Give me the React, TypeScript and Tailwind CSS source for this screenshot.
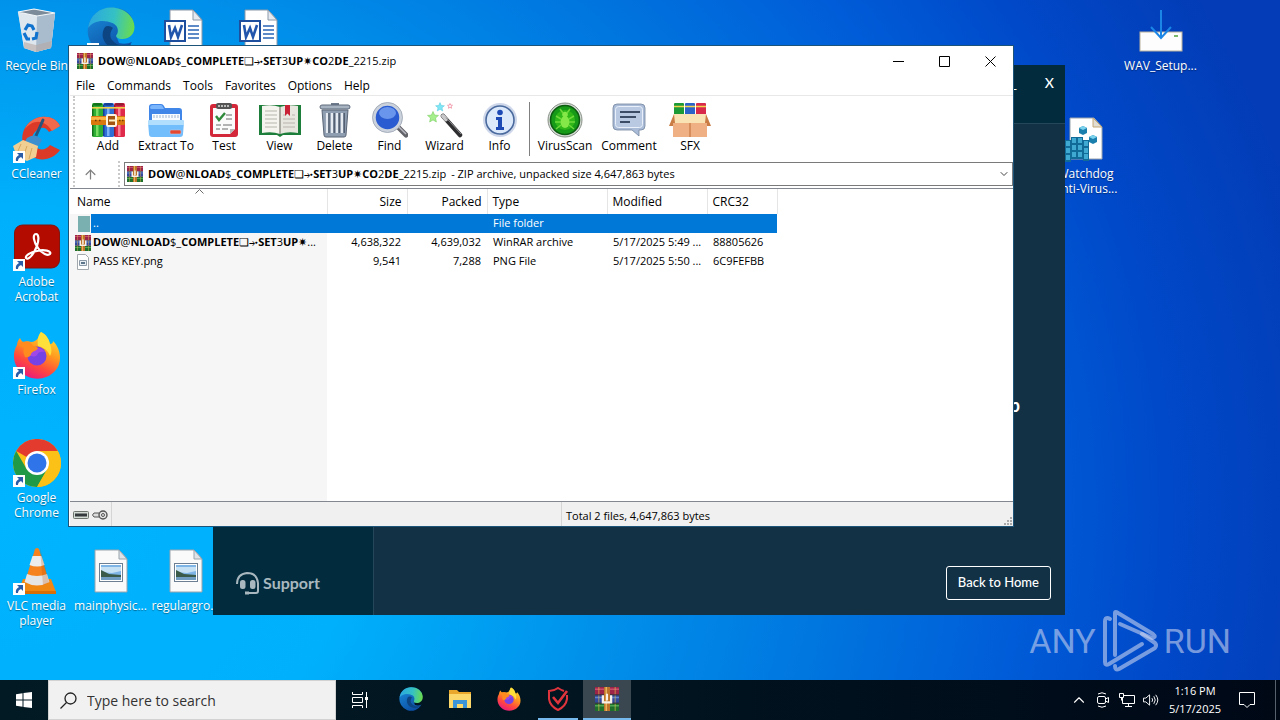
import type { ReactNode } from "react";
import { ArrowUp, ChevronDown, ChevronUp } from "lucide-react";

/* ---------- WinRAR artwork ---------- */

function WinRarIcon({ className }: { className: string }) {
  return (
    <svg viewBox="0 0 16 16" className={className} aria-hidden="true">
      <rect width="16" height="5" y="0" fill="#9c2448" />
      <rect width="16" height="1" y="1" fill="#c9506a" />
      <rect width="16" height="5" y="5.5" fill="#33499c" />
      <rect width="16" height="1" y="6.5" fill="#5f83cc" />
      <rect width="16" height="5" y="11" fill="#1f6f2c" />
      <rect width="16" height="1" y="12" fill="#4fa552" />
      <path d="M2 0h1v5H2zM13 0h1v5h-1zM2 5.5h1v5H2zM13 5.5h1v5h-1zM2 11h1v5H2zM13 11h1v5h-1z" fill="#d9b84c" opacity=".45" />
      <path d="M0 5h16v.5H0zM0 10.500h16v.5H0z" fill="#3b2a33" />
      <rect x="6" width="4" height="16" fill="#bd742a" />
      <rect x="7" width="1" height="16" fill="#e8b45c" />
      <path d="M4.500 5.500H6v4h4v-4h1.500v5.500h-7z" fill="#f5efe8" />
      <path d="M7.300 4.500h1.400v4.500H7.300z" fill="#f5efe8" />
    </svg>
  );
}

function AddIcon() {
  const books = [
    { x: 2, main: "#2fae36", dark: "#12701b", light: "#8ce86f" },
    { x: 13, main: "#2f6fd6", dark: "#153f92", light: "#8cc2ff" },
    { x: 24, main: "#e02a4c", dark: "#951a30", light: "#ff9aa6" },
  ];
  return (
    <svg viewBox="0 0 36 36" className="size-9" aria-hidden="true">
      {books.map((b) => (
        <g key={b.x}>
          <rect x={b.x} y="1" width="11" height="34" rx="1.5" fill={b.main} />
          <rect x={b.x} y="3" width="1.5" height="31" fill={b.dark} />
          <rect x={b.x + 4} y="6" width="2.5" height="28" fill={b.light} opacity=".8" />
          <ellipse cx={b.x + 5.5} cy="2.4" rx="4.6" ry="1.4" fill={b.dark} />
          <rect x={b.x} y="5" width="11" height="1.6" fill="#f0cf4b" />
        </g>
      ))}
      <rect x="1" y="14" width="34" height="9" rx="1" fill="#d9780f" />
      <rect x="1" y="15" width="34" height="3" fill="#fbb545" />
      <path d="M5 18.500h1.500M9 18.500h1.500M29 18.500h1.500M32 18.500h1.500" stroke="#6b3a06" strokeWidth="1.6" />
      <rect x="17" y="13" width="9" height="11" rx="1" fill="#a35410" stroke="#fff3e0" strokeWidth="2" />
      <path d="M19 18.500h8" stroke="#fff1c4" strokeWidth="2" />
    </svg>
  );
}

function ExtractIcon() {
  return (
    <svg viewBox="0 0 38 36" className="h-9 w-[38px]" aria-hidden="true">
      <path d="M2 5q0-3 3-3h9q2 0 3 2l1 2h14q3 0 3 3v20H2z" fill="#3f86e8" />
      <path d="M3 6q0-3 3-3h8q1 0 2 2l1 2H4z" fill="#7ab4fb" />
      <path d="M5 12h28v12H5z" fill="#f8fbff" />
      <path d="M7 13v3M10 13v3M13 13v3M16 13v3M19 13v3M22 13v3M25 13v3M28 13v3M31 13v3" stroke="#9fb4d0" strokeWidth="1" />
      <path d="M1 20q0-2 2-2h32q2 0 2 2l-1 12q0 3-3 3H5q-3 0-3-3z" fill="#72bdfb" />
      <path d="M1 20q0-2 2-2h32q2 0 2 2v3H1z" fill="#b2defe" />
      <rect x="23" y="28" width="11" height="4" rx="1" fill="#e5482f" stroke="#b7c9e8" strokeWidth=".6" />
    </svg>
  );
}

function TestIcon() {
  return (
    <svg viewBox="0 0 30 36" className="h-9 w-[30px]" aria-hidden="true">
      <rect x="1" y="2" width="28" height="33" rx="3" fill="#d3283a" />
      <path d="M4 6h22v21l-5 5H4z" fill="#fbfbfb" />
      <path d="M26 27l-5 5v-5z" fill="#b9b9b9" />
      <rect x="7" y="1" width="16" height="6" rx="2" fill="#555" />
      <path d="M9 4h12" stroke="#ddd" strokeWidth="1.5" strokeDasharray="2 1" />
      <path d="M7 14l3 4 6-7" fill="none" stroke="#2f8a3c" strokeWidth="2.4" />
      <path d="M17 13h6M17 17h6M7 23h5M14 23h9M7 27h4M13 27h6" stroke="#6d6d6d" strokeWidth="1.2" />
    </svg>
  );
}

function ViewIcon() {
  return (
    <svg viewBox="0 0 44 36" className="h-9 w-11" aria-hidden="true">
      <path d="M1 3h42v30H25l-3 2-3-2H1z" fill="#1d7d3a" />
      <path d="M4 4q10-2 18 1v27q-8-3-18-1z" fill="#f5f4ee" />
      <path d="M40 4q-10-2-18 1v27q8-3 18-1z" fill="#e8e7df" />
      <path d="M22 5v27" stroke="#8e8e86" strokeWidth="1.4" />
      <path d="M7 9h12M7 13h12M7 17h12M7 21h12M7 25h12M25 17h12M25 21h12M25 25h12M25 13h2M34 13h3" stroke="#b5b4ac" strokeWidth="1.2" />
      <path d="M27 3h5v11l-2.500-2.500L27 14z" fill="#c92236" />
    </svg>
  );
}

function DeleteIcon() {
  return (
    <svg viewBox="0 0 32 36" className="h-9 w-8" aria-hidden="true">
      <path d="M12 1h8v2h-8z" fill="#6d7b8d" />
      <rect x="1" y="3" width="30" height="4" rx="2" fill="#a8b3c1" stroke="#5d6a7b" />
      <path d="M3 8h26l-2 25q0 2-2 2H7q-2 0-2-2z" fill="#8f9db0" stroke="#5a6677" />
      <path d="M8 11v20M13 11v20M18 11v20M23 11v20" stroke="#e6ebf1" strokeWidth="2.200" />
      <path d="M10 11v20M15.200 11v20M20.200 11v20M25.200 11v20" stroke="#465365" strokeWidth="1.200" />
    </svg>
  );
}

function FindIcon() {
  return (
    <svg viewBox="0 0 36 36" className="size-9" aria-hidden="true">
      <path d="M25 24l9 9" stroke="#63636a" strokeWidth="5" strokeLinecap="round" />
      <path d="M25 23l9 9" stroke="#b9b9c2" strokeWidth="1.500" />
      <circle cx="15.500" cy="15.500" r="13.500" fill="#2a5bd0" stroke="#cbd2dc" strokeWidth="3.500" />
      <circle cx="15.500" cy="15.500" r="15" fill="none" stroke="#8b95a5" strokeWidth=".6" />
      <ellipse cx="15.500" cy="11" rx="8.500" ry="6" fill="#7fa9f6" opacity=".75" />
    </svg>
  );
}

function WizardIcon() {
  const star = "M0-5.500L1.600-1.900 5.500-1.600 2.500 1 3.400 5 0 2.900-3.400 5-2.500 1-5.500-1.600-1.600-1.900z";
  return (
    <svg viewBox="0 0 36 36" className="size-9" aria-hidden="true">
      <path d="M16 14L33 33" stroke="#2e2e30" strokeWidth="4.500" strokeLinecap="round" />
      <path d="M16 14l3 3.300" stroke="#c8c8ca" strokeWidth="4" strokeLinecap="round" />
      <path d="M19 15.500L34 32" stroke="#8c8c90" strokeWidth="1" />
      <path d={star} transform="translate(6 15)" fill="#a5ef8d" stroke="#7ccf63" strokeWidth=".6" />
      <path d={star} transform="translate(13 5) scale(.8)" fill="#7fe6f5" stroke="#4cc3dc" strokeWidth=".6" />
      <path d={star} transform="translate(23 4) scale(.45)" fill="#fff" stroke="#ee7f95" strokeWidth="1.600" />
    </svg>
  );
}

function InfoIcon() {
  return (
    <svg viewBox="0 0 36 36" className="size-9" aria-hidden="true">
      <circle cx="18" cy="18" r="17" fill="#cfd8ea" />
      <circle cx="18" cy="18" r="14" fill="#dce9fb" stroke="#4a6a9e" strokeWidth="1.600" />
      <circle cx="18" cy="10.500" r="2.800" fill="#1d49b4" />
      <path d="M14 15h6v10h2v3h-8v-3h2v-7h-2z" fill="#1d49b4" />
    </svg>
  );
}

function VirusIcon() {
  return (
    <svg viewBox="0 0 36 36" className="size-9" aria-hidden="true">
      <circle cx="18" cy="18" r="17" fill="#d8dcd8" stroke="#6c776c" strokeWidth=".8" />
      <circle cx="18" cy="18" r="14.500" fill="#179a18" stroke="#0c5b10" strokeWidth="1.600" />
      <circle cx="18" cy="18" r="10" fill="#2fb818" />
      <ellipse cx="18" cy="20" rx="4.500" ry="6" fill="#84e848" />
      <circle cx="18" cy="12.500" r="2.800" fill="#84e848" />
      <path d="M14 17l-5-3M14 20H8M14 23l-5 4M22 17l5-3M22 20h6M22 23l5 4M16 11l-3-4M20 11l3-4" stroke="#6fd93c" strokeWidth="1.500" />
    </svg>
  );
}

function CommentIcon() {
  return (
    <svg viewBox="0 0 34 36" className="h-9 w-[34px]" aria-hidden="true">
      <path d="M5 2h24q4 0 4 4v18q0 4-4 4h-2v6l-7-6H5q-4 0-4-4V6q0-4 4-4z" fill="#a9bbd6" stroke="#74869f" strokeWidth=".8" />
      <rect x="3.500" y="4.500" width="27" height="21" rx="3" fill="#b9c9e1" stroke="#e9f0fa" />
      <path d="M8 10h20M8 15h16M8 20h10" stroke="#3d4c66" strokeWidth="1.800" />
    </svg>
  );
}

function SfxIcon() {
  return (
    <svg viewBox="0 0 42 36" className="h-9 w-[42px]" aria-hidden="true">
      <rect x="5" y="1" width="10" height="16" rx="1" fill="#1c9a35" />
      <rect x="16" y="1" width="10" height="16" rx="1" fill="#2b63c9" />
      <rect x="27" y="1" width="10" height="16" rx="1" fill="#d8294b" />
      <path d="M5 4.500h10M16 4.500h10M27 4.500h10" stroke="#f2d34c" strokeWidth="1.600" />
      <path d="M5 12h32l2 9H3z" fill="#f9e3b4" />
      <path d="M5 12L0 24h4l2-3zM37 12l5 12h-4l-2-3z" fill="#c97c43" />
      <path d="M4 21h34v14H4z" fill="#efb083" />
      <path d="M20 21h2v14h-2z" fill="#d68f5c" />
    </svg>
  );
}

/* ---------- Desktop artwork ---------- */

function RecycleBinArt() {
  return (
    <svg viewBox="0 0 48 48" className="size-12" aria-hidden="true">
      <path d="M5 5l16-3 21 4-4 35-15 4-12-4z" fill="#cfdbe5" opacity=".9" />
      <path d="M5 5l19 4 18-3-4 35-15 4-12-4z" fill="#dfe7ee" />
      <path d="M24 9l18-3-4 35-15 4z" fill="#a9bccd" />
      <path d="M5 5l16-3 21 4-18 3z" fill="#7c8b99" stroke="#f3f7fa" strokeWidth="1.200" />
      <path d="M11 35l12 3 16-4-1 7-15 4-12-4z" fill="#b7a9a3" opacity=".6" />
      <g fill="none" stroke="#1273cf" strokeWidth="3.200">
        <path d="M12 23l3-5 4 1 2 4" />
        <path d="M11 26l3 6h3" />
        <path d="M19 32l4-1 1-6" />
      </g>
    </svg>
  );
}

function EdgeArt({ className }: { className: string }) {
  return (
    <svg viewBox="0 0 48 48" className={className} aria-hidden="true">
      <defs>
        <linearGradient id="edgeTop" x1="0" y1=".4" x2="1" y2=".5">
          <stop offset="0" stopColor="#2aa7e0" />
          <stop offset=".55" stopColor="#35c1c4" />
          <stop offset="1" stopColor="#6bdc4c" />
        </linearGradient>
        <linearGradient id="edgeSide" x1="0" y1="0" x2=".6" y2="1">
          <stop offset="0" stopColor="#1b8fdc" />
          <stop offset="1" stopColor="#0c4fa5" />
        </linearGradient>
      </defs>
      <path d="M24 .5A23.500 23.500 0 1 0 45 35q-6 3-13 1l-3-8 18-8Q46 .5 24 .5z" fill="url(#edgeSide)" />
      <path d="M1 21C3 8 13 .5 24 .5 38 .5 47.500 10 47.500 20c0 8-6 12-12 12-5 0-7-2-6-4 3-4 1-10-4-12C16 12 6 14 1 21z" fill="url(#edgeTop)" />
      <path d="M18 20c-6 9 0 21 12 22 7 1 12-2 14-5-6 3-14 2-18-3-4-4-3-9 0-13-2-2-6-3-8-1z" fill="#0d4583" />
    </svg>
  );
}

function WordFileArt() {
  return (
    <svg viewBox="0 0 48 48" className="size-12" aria-hidden="true">
      <path d="M8 3h23l9 10v34H8z" fill="#fff" stroke="#8b98a8" />
      <path d="M31 3v10h9z" fill="#e5eaf0" stroke="#8b98a8" />
      <path d="M26 19h11M26 23h11M26 27h11M26 31h11" stroke="#2a64b7" strokeWidth="1.400" />
      <rect x="3" y="14" width="20" height="20" fill="#fff" stroke="#1e4f9f" strokeWidth="2" />
      <path d="M7 18l2 12 4-9 3 9 4-12" fill="none" stroke="#2256ad" strokeWidth="2.600" />
    </svg>
  );
}

function ImageFileArt() {
  return (
    <svg viewBox="0 0 48 48" className="size-12" aria-hidden="true">
      <path d="M8 3h24l8 9v33H8z" fill="#fafafa" stroke="#9aa4ad" />
      <path d="M32 3v9h8z" fill="#dfe3e7" stroke="#9aa4ad" />
      <rect x="12.500" y="16.500" width="23" height="18" fill="#fff" stroke="#6c7f92" />
      <rect x="14" y="18" width="20" height="15" fill="#7fb4e6" />
      <path d="M14 20h20v4l-9 2-11-1z" fill="#c7e1f4" />
      <path d="M14 23l8 4 12 1v2H14z" fill="#3b5b4a" />
      <path d="M14 30h20v3H14z" fill="#6f9cc0" />
    </svg>
  );
}

function CCleanerArt() {
  return (
    <svg viewBox="0 0 48 48" className="size-12" aria-hidden="true">
      <path d="M47 11C42 0 26-1 17 7c-11 9-10 26 1 34 9 6 22 4 29-6l-10-5c-4 5-10 6-14 2-5-5-5-12 0-16 5-5 10-4 13 1z" fill="#dc3a28" />
      <path d="M47 11C42 0 26-1 17 7c-2 2-4 4-5 7 7-9 19-11 27 2z" fill="#f26a4e" />
      <path d="M30 5l-8 18" stroke="#23557f" strokeWidth="3" strokeLinecap="round" />
      <path d="M14 23q8-6 15 2l-4 7-14-4z" fill="#3d8fce" />
      <path d="M10 25l15 6-2 11-9 4-10-4-4-11z" fill="#f1cf93" />
      <path d="M8 29l-3 7M14 31l-4 11M19 33l-3 11" stroke="#d6a75e" />
    </svg>
  );
}

function AcrobatArt() {
  return (
    <svg viewBox="0 0 48 48" className="size-12" aria-hidden="true">
      <rect x="1.500" y="2" width="45" height="43" rx="8" fill="#b30b00" stroke="#7f1610" />
      <path
        d="M23 11c-4 0-2 9 2 14 4 6 10 8 12 6 2-3-6-5-13-3-7 1-12 5-11 7 2 3 8-4 11-12 2-6 2-12-1-12z"
        fill="none"
        stroke="#fff"
        strokeWidth="2.200"
      />
    </svg>
  );
}

function FirefoxArt({ className }: { className: string }) {
  return (
    <svg viewBox="0 0 48 48" className={className} aria-hidden="true">
      <defs>
        <linearGradient id="foxBody" x1=".8" y1="0" x2=".3" y2="1">
          <stop offset="0" stopColor="#ffe536" />
          <stop offset=".4" stopColor="#ff9a1f" />
          <stop offset=".7" stopColor="#ff4a3d" />
          <stop offset="1" stopColor="#e8177f" />
        </linearGradient>
      </defs>
      <path d="M28 1c6 3 8 8 9 12 2 0 3-1 3-3 9 9 9 23 2 30-9 10-25 10-34 1C0 34-1 22 4 14c0-2 1-5 3-7 1 2 2 4 4 4 2-1 5-1 7 0 3 0 6-2 7-4z" fill="url(#foxBody)" />
      <path d="M28 1c6 3 8 8 9 12 2 5 2 9 0 12-3-8-9-9-12-10-1-5 0-11 3-14z" fill="#ffdf3a" />
      <circle cx="24" cy="25" r="9.500" fill="#7542e5" />
      <path d="M16 20c4-5 13-4 16 1-4-1-7 0-8 3-3 3-7 1-9-1z" fill="#b04be8" opacity=".7" />
      <path d="M4 14c4-4 10-4 13-3l3 4c2 0 4 1 5 2-1 3-6 3-7 6 0 2-3 4-6 3-2-4-2-7-1-9z" fill="#ff8a1d" />
    </svg>
  );
}

function ChromeArt() {
  return (
    <svg viewBox="0 0 48 48" className="size-12" aria-hidden="true">
      <circle cx="24" cy="24" r="24" fill="#fbc116" />
      <path d="M24 24L3.200 12A24 24 0 0 1 44.800 12H24z" fill="#e33b2e" />
      <path d="M3.200 12L13.600 30 24 36 24.500 48A24 24 0 0 1 3.200 12z" fill="#219a48" />
      <path d="M34.400 30L24 48l-5-12z" fill="#219a48" />
      <path d="M34.400 30L24 48h1A24 24 0 0 0 44.800 12H24z" fill="#fbc116" />
      <circle cx="24" cy="24" r="12" fill="#fff" />
      <circle cx="24" cy="24" r="9.500" fill="#2f74e8" />
    </svg>
  );
}

function VlcArt() {
  return (
    <svg viewBox="0 0 48 48" className="size-12" aria-hidden="true">
      <path d="M10 32h28l5 13q0 2-2 2H6q-2 0-1-2z" fill="#f08713" />
      <path d="M5 44h38v3H6z" fill="#d96d06" />
      <path d="M22 2q2-2 4 0l10 33q-12 8-24 0z" fill="#f5821c" />
      <path d="M19.500 9h9l3 9q-7.500 3-15 0z" fill="#ececec" />
      <path d="M14 27q10 4 20 0l2.400 8q-12.400 7-24.800 0z" fill="#e5e5e5" />
      <path d="M27 1l9 34q-3 2-6 3z" fill="#b94f05" opacity=".25" />
    </svg>
  );
}

function SetupArt() {
  return (
    <svg viewBox="0 0 48 48" className="size-12" aria-hidden="true">
      <rect x="3" y="25" width="42" height="19" fill="#fdfdfd" stroke="#b9b19d" />
      <path d="M24 3v28M14 20l10 11 10-11" fill="none" stroke="#1b86e6" strokeWidth="2" />
      <path d="M37 29h4" stroke="#4fa13a" strokeWidth="1.500" />
    </svg>
  );
}

function RegistryArt() {
  const cubes = [
    [3, 25], [9, 22], [15, 22], [21, 25],
    [3, 32], [9, 29], [15, 29], [21, 32],
    [3, 39], [9, 36], [15, 36], [21, 38],
  ];
  return (
    <svg viewBox="0 0 48 48" className="size-12" aria-hidden="true">
      <path d="M8 3h24l8 9v32H8z" fill="#fff" stroke="#9aa4ad" />
      <path d="M31 3v9h9z" fill="#e2ddd2" stroke="#c2a878" />
      {cubes.map(([x, y]) => (
        <g key={`${x}-${y}`}>
          <rect x={x} y={y} width="6" height="8" fill="#116b98" />
          <rect x={x + 1} y={y + 1} width="4" height="5" fill="#3fa9d2" />
        </g>
      ))}
      <path d="M17 13l4-2 4 2v5l-4 2-4-2z" fill="#1b7fae" />
      <path d="M17 13l4-2 4 2-4 2z" fill="#7bd3ee" />
      <path d="M27 22l4-2 4 2v5l-4 2-4-2z" fill="#1b7fae" />
      <path d="M27 22l4-2 4 2-4 2z" fill="#7bd3ee" />
    </svg>
  );
}

/* ---------- Desktop ---------- */

interface DesktopItem {
  label: string;
  art: ReactNode;
  cell: string;
  shortcut?: boolean;
}

const desktopItems: DesktopItem[] = [
  { label: "Recycle Bin", art: <RecycleBinArt />, cell: "col-start-1 row-start-1" },
  { label: "CCleaner", art: <CCleanerArt />, cell: "col-start-1 row-start-2", shortcut: true },
  { label: "Adobe Acrobat", art: <AcrobatArt />, cell: "col-start-1 row-start-3", shortcut: true },
  { label: "Firefox", art: <FirefoxArt className="size-12" />, cell: "col-start-1 row-start-4", shortcut: true },
  { label: "Google Chrome", art: <ChromeArt />, cell: "col-start-1 row-start-5", shortcut: true },
  { label: "VLC media player", art: <VlcArt />, cell: "col-start-1 row-start-6", shortcut: true },
  { label: "", art: <EdgeArt className="size-12" />, cell: "col-start-2 row-start-1", shortcut: true },
  { label: "mainphysic...", art: <ImageFileArt />, cell: "col-start-2 row-start-6" },
  { label: "", art: <WordFileArt />, cell: "col-start-3 row-start-1" },
  { label: "regulargro...", art: <ImageFileArt />, cell: "col-start-3 row-start-6" },
  { label: "", art: <WordFileArt />, cell: "col-start-4 row-start-1" },
  { label: "Watchdog Anti-Virus...", art: <RegistryArt />, cell: "col-start-15 row-start-2" },
  { label: "WAV_Setup...", art: <SetupArt />, cell: "col-start-16 row-start-1" },
];

function DesktopIcons() {
  return (
    <div className="grid grid-cols-[73px_repeat(15,75px)] grid-rows-[repeat(6,108px)]">
      {desktopItems.map((item, index) => (
        <div key={index} className={`flex flex-col items-center pt-[7px] ${item.cell}`}>
          <div className="relative">
            {item.art}
            {item.shortcut && (
              <svg viewBox="0 0 12 12" className="absolute bottom-0 left-0 size-3" aria-hidden="true">
                <path d="M0 0h12v12H0z" fill="#fff" />
                <path d="M4 2h6v6L8 6Q5 7 5 10H3Q2 6 6 4z" fill="#2a5ca8" />
              </svg>
            )}
          </div>
          <span className="mt-[3px] text-center text-[12px] leading-[15px] text-white text-shadow-[0_1px_1px_rgb(0_0_0/0.4)]">
            {item.label}
          </span>
        </div>
      ))}
    </div>
  );
}

function Watermark() {
  return (
    <div className="absolute right-[49px] bottom-[8px] flex items-center gap-[6px] font-['Roboto',sans-serif] text-[34px] leading-none text-[#c8d2ee]/60">
      <span>ANY</span>
      <svg viewBox="0 0 56 62" className="h-[62px] w-14" fill="none" stroke="currentColor" strokeWidth="4" strokeLinejoin="round" strokeLinecap="round" aria-hidden="true">
        <path d="M8 9Q3 6 3 12V52Q3 56 7 54L40 34" />
        <path d="M13 45V3Q13 1 16 3L51 24Q55 27 50 28L18 14" />
        <path d="M40 24L53 33Q55 35 53 38L17 59Q13 61 13 56" />
      </svg>
      <span>RUN</span>
    </div>
  );
}

/* ---------- Watchdog window ---------- */

function WatchdogWindow() {
  return (
    <section
      aria-label="Watchdog Anti-Virus"
      className="absolute top-[65px] right-[215px] bottom-[65px] left-[213px] flex flex-col bg-[#123145] font-['Lato',sans-serif] text-white"
    >
      <header className="flex h-[59px] items-start justify-end gap-7 border-b border-[#24485a] bg-[#022c3e] px-[11px] pt-[7px] text-[14px] font-medium">
        <button type="button" aria-label="Minimize">_</button>
        <button type="button" aria-label="Close">X</button>
      </header>
      <div className="flex min-h-0 flex-1">
        <nav className="flex w-[161px] flex-col justify-end border-r border-[#24485a] bg-[#022c3e] pb-5 pl-[23px]">
          <a href="#support" className="flex items-center gap-[3px] text-[16px] font-bold text-[#a9b8bf]">
            <svg viewBox="0 0 24 24" className="size-6" fill="none" stroke="currentColor" strokeWidth="2" aria-hidden="true">
              <path d="M1 13Q1 3 11 2q10 0 11 10v8q0 2-2 2h-7" />
              <rect x="5" y="10" width="3.500" height="7" rx="1.500" fill="currentColor" />
              <rect x="15" y="10" width="3.500" height="7" rx="1.500" fill="currentColor" />
              <path d="M9 22h4" strokeWidth="3" />
            </svg>
            Support
          </a>
        </nav>
        <main className="flex flex-1 flex-col items-end justify-between px-[14px] pb-[15px]">
          <p className="mt-[268px] mr-[31px] text-[18px] font-bold">p</p>
          <button type="button" className="h-[34px] rounded-[3px] border border-white px-[11px] text-[13px] font-medium">
            Back to Home
          </button>
        </main>
      </div>
    </section>
  );
}

/* ---------- WinRAR window ---------- */

const menus = ["File", "Commands", "Tools", "Favorites", "Options", "Help"];

const archiveTools = [
  { label: "Add", icon: <AddIcon />, width: "w-14" },
  { label: "Extract To", icon: <ExtractIcon />, width: "w-[60px]" },
  { label: "Test", icon: <TestIcon />, width: "w-14" },
  { label: "View", icon: <ViewIcon />, width: "w-[55px]" },
  { label: "Delete", icon: <DeleteIcon />, width: "w-[55px]" },
  { label: "Find", icon: <FindIcon />, width: "w-[55px]" },
  { label: "Wizard", icon: <WizardIcon />, width: "w-[55px]" },
  { label: "Info", icon: <InfoIcon />, width: "w-[55px]" },
];

const extraTools = [
  { label: "VirusScan", icon: <VirusIcon />, width: "w-[62px]" },
  { label: "Comment", icon: <CommentIcon />, width: "w-[66px]" },
  { label: "SFX", icon: <SfxIcon />, width: "w-14" },
];

function ArchiveName({ suffix }: { suffix: string }) {
  return (
    <>
      <b>DOW</b>@<b>NLOAD</b>$_<b>COMPLETE</b>❏⤞<b>SET</b>3<b>UP</b>✷{suffix}
    </>
  );
}

function FullArchiveName() {
  return (
    <>
      <ArchiveName suffix="" />
      <b>CO</b>2<b>DE</b>_2215.zip
    </>
  );
}

function ToolButton({ label, icon, width }: { label: string; icon: ReactNode; width: string }) {
  return (
    <button type="button" className={`flex flex-col items-center gap-px whitespace-nowrap ${width}`}>
      {icon}
      <span className="text-[12px] leading-[14px]">{label}</span>
    </button>
  );
}

function FileTable() {
  return (
    <table className="h-full w-[707px] table-fixed border-collapse text-left text-[11px] whitespace-nowrap">
      <colgroup>
        <col className="w-[257px]" />
        <col className="w-20" />
        <col className="w-20" />
        <col className="w-[120px]" />
        <col className="w-[100px]" />
        <col className="w-[70px]" />
      </colgroup>
      <thead>
        <tr className="h-[25px] text-[12px] *:border-r *:border-[#e5e5e5] *:px-[5px] *:font-normal">
          <th className="relative">
            <span className="pl-0.5">Name</span>
            <svg viewBox="0 0 9 5" className="absolute top-0 left-[125px] h-[5px] w-[9px]" aria-hidden="true">
              <path d="M.5 4.500l4-4 4 4" fill="none" stroke="#6b6b6b" />
            </svg>
          </th>
          <th className="text-right">Size</th>
          <th className="text-right">Packed</th>
          <th>Type</th>
          <th>Modified</th>
          <th>CRC32</th>
        </tr>
      </thead>
      <tbody>
        <tr className="h-[19px] bg-[#0078d7] text-white *:px-1.5">
          <td>
            <div className="-ml-1.5 flex h-[19px] items-center">
              <span className="flex h-[19px] w-[21px] items-center justify-end bg-[#f6f6f6] pr-px">
                <span className="h-4 w-3 bg-[#7bb0b0]" />
              </span>
              <span className="pl-0.5">..</span>
            </div>
          </td>
          <td />
          <td />
          <td>File folder</td>
          <td />
          <td />
        </tr>
        <tr className="h-[19px] *:px-1.5">
          <td className="bg-[#f6f6f6]">
            <div className="-ml-px flex items-center gap-0.5">
              <WinRarIcon className="size-4 shrink-0" />
              <span><ArchiveName suffix="..." /></span>
            </div>
          </td>
          <td className="text-right">4,638,322</td>
          <td className="text-right">4,639,032</td>
          <td>WinRAR archive</td>
          <td>5/17/2025 5:49 ...</td>
          <td>88805626</td>
        </tr>
        <tr className="h-[19px] *:px-1.5">
          <td className="bg-[#f6f6f6]">
            <div className="-ml-px flex items-center gap-0.5">
              <svg viewBox="0 0 16 16" className="size-4 shrink-0" aria-hidden="true">
                <path d="M2.500.5h8l3 3v12h-11z" fill="#fff" stroke="#a3a8ad" />
                <path d="M4.500 6.500h7v5h-7z" fill="#e9eef2" stroke="#8b98a5" />
                <path d="M6 8h4v2H6z" fill="#5c7589" />
              </svg>
              PASS KEY.png
            </div>
          </td>
          <td className="text-right">9,541</td>
          <td className="text-right">7,288</td>
          <td>PNG File</td>
          <td>5/17/2025 5:50 ...</td>
          <td>6C9FEFBB</td>
        </tr>
        <tr>
          <td className="bg-[#f6f6f6]" />
          <td colSpan={5} />
        </tr>
      </tbody>
    </table>
  );
}

function WinRarWindow() {
  return (
    <section
      aria-label="WinRAR"
      className="absolute top-[45px] right-[266px] bottom-[153px] left-[68px] flex flex-col border border-[#1b5379] bg-white pl-px text-black"
    >
      <header className="flex h-[30px] items-center pl-[7px]">
        <WinRarIcon className="size-4" />
        <h1 className="flex-1 pl-[5px] text-[11px]"><FullArchiveName /></h1>
        <button type="button" aria-label="Minimize" className="flex w-[45px] justify-center">
          <svg viewBox="0 0 11 11" className="size-[11px]" stroke="#000" fill="none"><path d="M0 5.500h11" /></svg>
        </button>
        <button type="button" aria-label="Maximize" className="flex w-[46px] justify-center">
          <svg viewBox="0 0 11 11" className="size-[11px]" stroke="#000" fill="none"><path d="M.5.5h10v10H.5z" /></svg>
        </button>
        <button type="button" aria-label="Close" className="flex w-[46px] justify-center">
          <svg viewBox="0 0 11 11" className="size-[11px]" stroke="#000" fill="none"><path d="M.5.5l10 10M10.500.5l-10 10" /></svg>
        </button>
      </header>

      <nav className="flex h-5 items-center gap-3 border-b border-[#e8e8e8] px-[6px] text-[12px]">
        {menus.map((menu) => (
          <button key={menu} type="button">{menu}</button>
        ))}
      </nav>

      <div className="flex flex-col pl-[3px]">
        <div className="flex h-[65px] items-start border-l-2 border-dotted border-[#c9c9c9] pt-1.5 pl-[5px]">
          {archiveTools.map((tool) => (
            <ToolButton key={tool.label} {...tool} />
          ))}
          <div className="mr-1 ml-[2px] h-[54px] w-px bg-[#808080]" />
          {extraTools.map((tool) => (
            <ToolButton key={tool.label} {...tool} />
          ))}
        </div>
        <div className="flex h-[26px] items-center">
          <div className="flex h-full w-[47px] items-center border-x-2 border-dotted border-[#c9c9c9] pl-2">
            <button type="button" aria-label="Up one level">
              <ArrowUp className="size-[15px] text-[#808080]" />
            </button>
          </div>
          <div className="ml-1 flex h-6 flex-1 items-center border border-[#7a7a7a] pr-0.5 pl-0.5 text-[11px]">
            <WinRarIcon className="size-4" />
            <label htmlFor="path" className="pl-[5px]"><FullArchiveName /></label>
            <select id="path" className="flex-1 appearance-none pl-[5px] outline-none">
              <option>- ZIP archive, unpacked size 4,647,863 bytes</option>
            </select>
            <ChevronDown className="size-3 text-[#444]" />
          </div>
        </div>
      </div>

      <div className="mt-px min-h-0 flex-1 border-y border-t-[#828790] border-b-[#828790]">
        <FileTable />
      </div>

      <footer className="flex h-6 items-center bg-[#f0f0f0] text-[11px]">
        <div className="flex h-full flex-1 items-center">
          <div className="flex h-full w-[42px] items-center gap-[3px] border-r border-[#d5d5d5] pt-px pl-[3px]">
            <svg viewBox="0 0 16 8" className="h-2 w-4" aria-hidden="true">
              <rect x=".5" y=".5" width="15" height="7" rx="1" fill="#d4dad4" stroke="#6d746d" />
              <rect x="2" y="2.500" width="12" height="3" fill="#353a3d" />
            </svg>
            <svg viewBox="0 0 16 10" className="h-[10px] w-4" fill="none" stroke="#555" aria-hidden="true">
              <path d="M7 3H2L.5 5 2 7h5" fill="#ddd" />
              <circle cx="11" cy="5" r="4" fill="#e5e5e5" strokeWidth="1.400" />
              <circle cx="11" cy="5" r="1.500" />
            </svg>
          </div>
        </div>
        <div className="flex h-full w-[452px] items-center border-l border-[#d5d5d5] pl-1">
          <span className="flex-1 pt-1">Total 2 files, 4,647,863 bytes</span>
          <svg viewBox="0 0 10 10" className="size-[10px] self-end" fill="#aaa" aria-hidden="true">
            <path d="M7 7h2v2H7zM4 7h2v2H4zM1 7h2v2H1zM7 4h2v2H7zM4 4h2v2H4zM7 1h2v2H7z" />
          </svg>
        </div>
      </footer>
    </section>
  );
}

/* ---------- Taskbar ---------- */

function Taskbar() {
  return (
    <footer className="relative flex h-10 items-stretch bg-linear-to-r from-[#021a24] via-[#011420] to-[#000816] text-white">
      <button type="button" aria-label="Start" className="flex w-12 items-center justify-center">
        <svg viewBox="0 0 16 16" className="size-4" fill="#fff">
          <path d="M0 2.200l6.500-.9v6.200H0zM7.500 1.100L16 0v7.500H7.500zM0 8.500h6.500v6.200L0 13.800zM7.500 8.500H16V16l-8.500-1.100z" />
        </svg>
      </button>
      <label className="flex w-72 items-center gap-[10px] border border-[#d2d2d2] bg-[#f1f1f1] pl-[11px] text-[#333]">
        <svg viewBox="0 0 17 17" className="size-[17px]" fill="none" stroke="#222" strokeWidth="1.300" aria-hidden="true">
          <circle cx="10.500" cy="6.500" r="5.500" />
          <path d="M6.500 10.500L.5 16.500" />
        </svg>
        <input
          type="text"
          aria-label="Search"
          placeholder="Type here to search"
          className="min-w-0 flex-1 bg-transparent text-[14px] outline-none placeholder:text-[#333]"
        />
      </label>
      <button type="button" aria-label="Task View" className="flex w-12 items-center justify-center">
        <svg viewBox="0 0 16 16" className="size-4" fill="none" stroke="#fff">
          <path d="M.5 0v2.500h10V0M.5 5.500h10v5H.5zM.5 16v-2.500h10V16M14.500 0v16" />
          <path d="M13 5h3v3h-3z" fill="#fff" stroke="none" />
        </svg>
      </button>
      <div className="ml-[3px] flex gap-px *:flex *:w-12 *:items-center *:justify-center *:border-b-2 *:border-transparent">
        <button type="button" aria-label="Microsoft Edge"><EdgeArt className="size-6" /></button>
        <button type="button" aria-label="File Explorer">
          <svg viewBox="0 0 22 20" className="h-5 w-[22px]">
            <path d="M0 1h8l2 2h12v16H0z" fill="#e9a82c" />
            <path d="M0 5h22v14H0z" fill="#fbd869" />
            <path d="M4 11h14v8h-4v-4H8v4H4z" fill="#3b93d8" />
          </svg>
        </button>
        <button type="button" aria-label="Firefox"><FirefoxArt className="size-6" /></button>
        <div>
          <button type="button" aria-label="Watchdog" className="flex h-full w-10 items-center justify-center shadow-[0_2px_0_#76b9ed]">
            <svg viewBox="0 0 22 24" className="h-6 w-[22px]" fill="none" stroke="#e0343c" strokeWidth="2">
              <path d="M20 8v4Q19 19 11 23 3 19 2 12V4Q7 4 11 1q3 2 6 3" />
              <path d="M6 10l5 6L20 4" strokeWidth="2.600" />
            </svg>
          </button>
        </div>
        <div className="bg-[#3a4750]">
          <button type="button" aria-label="WinRAR" className="flex h-full w-12 items-center justify-center shadow-[0_2px_0_#76b9ed]">
            <WinRarIcon className="size-6" />
          </button>
        </div>
      </div>
      <div className="ml-auto flex items-center">
        <div className="flex items-center gap-2 *:flex *:size-4 *:items-center *:justify-center">
          <button type="button" aria-label="Show hidden icons"><ChevronUp className="size-[18px] shrink-0" strokeWidth={1.5} /></button>
          <button type="button" aria-label="Meet Now">
            <svg viewBox="0 0 16 16" className="size-4" fill="none" stroke="#fff">
              <rect x="2.500" y="4.500" width="8" height="7" rx="1.500" />
              <path d="M10.500 7l3-1.500v5L10.500 9M3 2q4-2.500 8 0M3 14q4 2.500 8 0" />
            </svg>
          </button>
          <button type="button" aria-label="Network">
            <svg viewBox="0 0 16 16" className="size-4" fill="none" stroke="#fff">
              <path d="M5 3.500h10.500v8h-12V6M9.500 11.500v3M6 14.500h7M.5 1.500h4v4h-4zM2.500 5.500v3" />
            </svg>
          </button>
          <button type="button" aria-label="Volume">
            <svg viewBox="0 0 17 16" className="size-4" fill="none" stroke="#fff">
              <path d="M.5 6h2.500l4-3.500v11L3 10H.5zM9.500 6q1.500 2 0 4M11.500 4q3 4 0 8M13.500 2.500q4.500 5.500 0 11" />
            </svg>
          </button>
        </div>
        <div className="w-[72px] text-center text-[11px] leading-[18px]">
          <div>1:16 PM</div>
          <div>5/17/2025</div>
        </div>
        <button type="button" aria-label="Notifications" className="flex w-8 justify-center">
          <svg viewBox="0 0 16 16" className="size-4" fill="none" stroke="#fff">
            <path d="M.5.5h15v12H11l-3 3-3-3H.5z" />
          </svg>
        </button>
        <div className="mr-1 ml-3 h-10 w-px bg-[#56616c]" />
      </div>
    </footer>
  );
}

export default function App() {
  return (
    <div className="flex h-screen flex-col overflow-hidden font-['Open_Sans','Noto_Sans',sans-serif]">
      <div className="relative min-h-0 flex-1 overflow-hidden bg-[radial-gradient(100%_160%_at_0%_75%,#00b4ff_0%,#00b0fc_28%,#0094ec_46%,#0074de_66%,#005cd8_80%,#0048c8_92%,#033cb6_105%)]">
        <DesktopIcons />
        <Watermark />
        <WatchdogWindow />
        <WinRarWindow />
      </div>
      <Taskbar />
    </div>
  );
}
